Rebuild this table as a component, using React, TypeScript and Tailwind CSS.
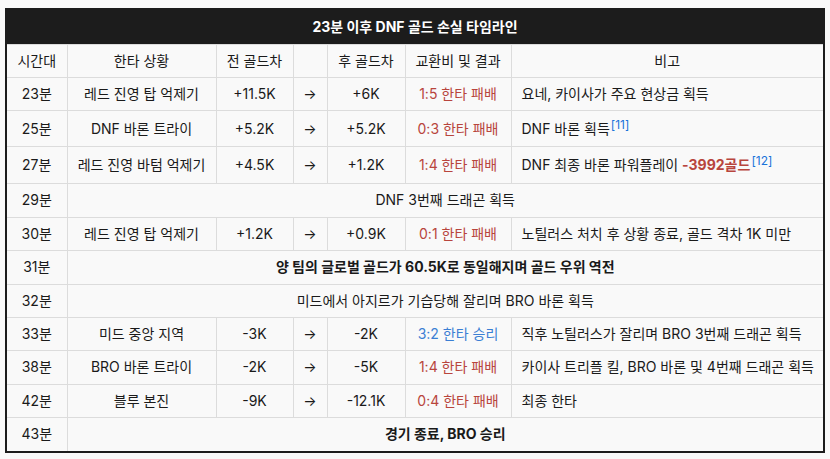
import React from "react";

type Row =
  | { time: string; merged: string; bold?: boolean }
  | {
      time: string;
      situation: string;
      before: string;
      after: string;
      result: string;
      win?: boolean;
      note: React.ReactNode;
      tall?: string;
    };

const Ref = ({ n }: { n: number }) => (
  <span className="ml-[1px] text-[12px] leading-none text-[#1a73d9] align-[5px]">[{n}]</span>
);

const ROWS: Row[] = [
  { time: "23분", situation: "레드 진영 탑 억제기", before: "+11.5K", after: "+6K", result: "1:5 한타 패배", note: "요네, 카이사가 주요 현상금 획득" },
  { time: "25분", situation: "DNF 바론 트라이", before: "+5.2K", after: "+5.2K", result: "0:3 한타 패배", note: <>DNF 바론 획득<Ref n={11} /></>, tall: "h-[36px]" },
  {
    time: "27분",
    situation: "레드 진영 바텀 억제기",
    before: "+4.5K",
    after: "+1.2K",
    result: "1:4 한타 패배",
    tall: "h-[37px]",
    note: (
      <>
        DNF 최종 바론 파워플레이 <b className="text-[#b8453d]">-3992골드</b>
        <Ref n={12} />
      </>
    ),
  },
  { time: "29분", merged: "DNF 3번째 드래곤 획득" },
  { time: "30분", situation: "레드 진영 탑 억제기", before: "+1.2K", after: "+0.9K", result: "0:1 한타 패배", note: "노틸러스 처치 후 상황 종료, 골드 격차 1K 미만" },
  { time: "31분", merged: "양 팀의 글로벌 골드가 60.5K로 동일해지며 골드 우위 역전", bold: true },
  { time: "32분", merged: "미드에서 아지르가 기습당해 잘리며 BRO 바론 획득" },
  { time: "33분", situation: "미드 중앙 지역", before: "-3K", after: "-2K", result: "3:2 한타 승리", win: true, note: "직후 노틸러스가 잘리며 BRO 3번째 드래곤 획득" },
  { time: "38분", situation: "BRO 바론 트라이", before: "-2K", after: "-5K", result: "1:4 한타 패배", note: "카이사 트리플 킬, BRO 바론 및 4번째 드래곤 획득" },
  { time: "42분", situation: "블루 본진", before: "-9K", after: "-12.1K", result: "0:4 한타 패배", note: "최종 한타" },
  { time: "43분", merged: "경기 종료, BRO 승리", bold: true },
];

const td = "border border-[#dcdcdc] px-[4px] py-[5px] text-center whitespace-nowrap";

export default function App() {
  return (
    <div
      className="min-h-screen bg-[#f9f9f9] pt-[8px] pl-[5px] text-[14px] leading-[22.4px] text-[#1a1a1a]"
      style={{ fontFamily: 'Inter, "Noto Sans CJK KR", sans-serif' }}
    >
      <table className="w-[820px] table-fixed border-collapse border-2 border-[#1c1c1c] bg-[#f9f9f9]">
        <colgroup>
          <col className="w-[61px]" />
          <col className="w-[149px]" />
          <col className="w-[77px]" />
          <col className="w-[34px]" />
          <col className="w-[78px]" />
          <col className="w-[106px]" />
          <col />
        </colgroup>
        <thead>
          <tr>
            <th colSpan={7} className="bg-[#1c1c1c] h-[35px] text-center text-[14px] font-bold text-white">
              23분 이후 DNF 골드 손실 타임라인
            </th>
          </tr>
          <tr>
            <td className={td}>시간대</td>
            <td className={td}>한타 상황</td>
            <td className={td}>전 골드차</td>
            <td className={td}></td>
            <td className={td}>후 골드차</td>
            <td className={td}>교환비 및 결과</td>
            <td className={td}>비고</td>
          </tr>
        </thead>
        <tbody>
          {ROWS.map(r =>
            "merged" in r ? (
              <tr key={r.time}>
                <td className={td}>{r.time}</td>
                <td colSpan={6} className={`${td} ${r.bold ? "font-bold" : ""}`}>
                  {r.merged}
                </td>
              </tr>
            ) : (
              <tr key={r.time} className={r.tall ?? ""}>
                <td className={td}>{r.time}</td>
                <td className={td}>{r.situation}</td>
                <td className={td}>{r.before}</td>
                <td className={td}>→</td>
                <td className={td}>{r.after}</td>
                <td className={`${td} ${r.win ? "text-[#3b7fd4]" : "text-[#b8453d]"}`}>{r.result}</td>
                <td className="border border-[#dcdcdc] pl-[10px] pr-[4px] py-[5px] text-left whitespace-nowrap">
                  {r.note}
                </td>
              </tr>
            )
          )}
        </tbody>
      </table>
    </div>
  );
}
